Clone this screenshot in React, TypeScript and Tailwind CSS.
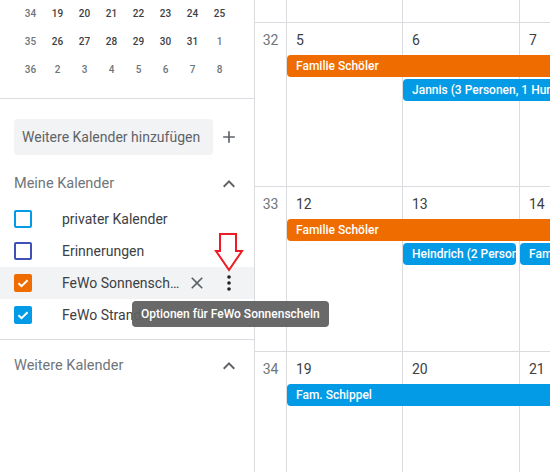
import React from "react";

const ChevronUp = () => (
  <svg width="24" height="24" viewBox="0 0 24 24" className="fill-[#5f6368]">
    <path d="M12 8l-6 6 1.41 1.41L12 10.83l4.59 4.58L18 14z" />
  </svg>
);

const Plus = () => (
  <svg width="20" height="20" viewBox="0 0 24 24" className="fill-[#5f6368]">
    <path d="M19 13h-6v6h-2v-6H5v-2h6V5h2v6h6v2z" />
  </svg>
);

const CloseIcon = () => (
  <svg width="20" height="20" viewBox="0 0 24 24" className="fill-[#5f6368]">
    <path d="M19 6.41L17.59 5 12 10.59 6.41 5 5 6.41 10.59 12 5 17.59 6.41 19 12 13.41 17.59 19 19 17.59 13.41 12z" />
  </svg>
);

const MoreVert = () => (
  <svg width="24" height="24" viewBox="0 0 24 24" className="fill-[#202124]">
    <circle cx="12" cy="6" r="1.8" />
    <circle cx="12" cy="12" r="1.8" />
    <circle cx="12" cy="18" r="1.8" />
  </svg>
);

function Checkbox({ checked, color }: { checked: boolean; color: string }) {
  if (checked) {
    return (
      <div className={`flex h-[18px] w-[18px] shrink-0 items-center justify-center rounded-[2px] ${color}`}>
        <svg width="18" height="18" viewBox="0 0 18 18">
          <path d="M4.5 9.2l3 3L13.6 6.2" fill="none" stroke="white" strokeWidth="2" />
        </svg>
      </div>
    );
  }
  return <div className={`h-[18px] w-[18px] shrink-0 rounded-[2px] border-2 ${color}`} />;
}

const miniRows: { wk: number; days: { d: number; cur: boolean }[] }[] = [
  { wk: 34, days: [19, 20, 21, 22, 23, 24, 25].map((d) => ({ d, cur: true })) },
  {
    wk: 35,
    days: [26, 27, 28, 29, 30, 31, 1].map((d, i) => ({ d, cur: i < 6 })),
  },
  { wk: 36, days: [2, 3, 4, 5, 6, 7, 8].map((d) => ({ d, cur: false })) },
];

function DayCells({ nums }: { nums: (number | null)[] }) {
  return (
    <>
      {nums.map((n, i) => (
        <div
          key={i}
          className={`row-[1/-1] border-l border-[#dadce0] pl-[9px] pt-[7px] text-[14px] leading-[20px] text-[#3c4043] ${
            i === 0 ? "col-start-2" : i === 1 ? "col-start-3" : i === 2 ? "col-start-4" : "col-start-5"
          }`}
        >
          {n}
        </div>
      ))}
    </>
  );
}

const grid = "grid grid-cols-[31px_116px_117px_116px_116px]";

export default function App() {
  return (
    <div className="relative flex h-[472px] w-[550px] overflow-hidden bg-white font-['Roboto',sans-serif]">
      {/* Sidebar */}
      <aside className="flex w-[255px] shrink-0 flex-col border-r border-[#dadce0]">
        <div className="border-b border-[#dadce0] pb-[15px]">
          <div className="-mt-px grid grid-cols-[repeat(8,27px)] pl-[17px]">
            {miniRows.map((r) => (
              <React.Fragment key={r.wk}>
                <div className="flex h-[28px] items-center justify-center text-[10px] font-medium text-[#70757a]">
                  {r.wk}
                </div>
                {r.days.map((d, i) => (
                  <div
                    key={i}
                    className={`flex h-[28px] items-center justify-center text-[10px] font-medium ${
                      d.cur ? "text-[#3c4043]" : "text-[#70757a]"
                    }`}
                  >
                    {d.d}
                  </div>
                ))}
              </React.Fragment>
            ))}
          </div>
        </div>

        <div className="mt-[20px] flex items-center pl-[14px]">
          <div className="flex h-[36px] w-[199px] items-center whitespace-nowrap rounded-[4px] bg-[#f1f3f4] pl-[8px] text-[14px] text-[#5f6368]">
            Weitere Kalender hinzufügen
          </div>
          <div className="ml-[6px] flex h-[20px] w-[20px] items-center justify-center">
            <Plus />
          </div>
        </div>

        <div className="mt-[8px] flex h-[40px] items-center justify-between pl-[14px] pr-[13px] pt-[2px]">
          <span className="text-[14.5px] text-[#70757a]">Meine Kalender</span>
          <ChevronUp />
        </div>

        <div className="flex h-[32px] items-center pl-[14px]">
          <Checkbox checked={false} color="border-[#039be5]" />
          <span className="ml-[30px] text-[14px] text-[#3c4043]">privater Kalender</span>
        </div>
        <div className="flex h-[32px] items-center pl-[14px]">
          <Checkbox checked={false} color="border-[#3f51b5]" />
          <span className="ml-[30px] text-[14px] text-[#3c4043]">Erinnerungen</span>
        </div>
        <div className="flex h-[32px] items-center bg-[#f1f3f4] pl-[14px]">
          <Checkbox checked={true} color="bg-[#ef6c00]" />
          <span className="ml-[30px] w-[118px] truncate text-[14px] text-[#3c4043]">FeWo Sonnenschein</span>
          <div className="ml-[7px] flex h-[20px] w-[20px] items-center justify-center">
            <CloseIcon />
          </div>
          <div className="ml-[10px] flex h-[24px] w-[24px] items-center justify-center">
            <MoreVert />
          </div>
        </div>
        <div className="flex h-[32px] items-center pl-[14px]">
          <Checkbox checked={true} color="bg-[#039be5]" />
          <span className="ml-[30px] text-[14px] text-[#3c4043]">FeWo Strandkorb</span>
        </div>

        <div className="mt-[8px] flex h-[49px] items-center justify-between border-t border-[#dadce0] pl-[14px] pr-[13px] pt-[3px]">
          <span className="text-[14.5px] text-[#70757a]">Weitere Kalender</span>
          <ChevronUp />
        </div>
      </aside>

      {/* Calendar */}
      <main className="flex min-w-0 flex-1 flex-col overflow-hidden">
        <div className={`${grid} h-[22px] grid-rows-[1fr]`}>
          <DayCells nums={[null, null, null, null]} />
        </div>

        <div className={`${grid} h-[164px] shrink-0 grid-rows-[32px_24px_24px_1fr] border-t border-[#dadce0]`}>
          <div className="col-start-1 row-start-1 pt-[7px] text-center text-[14px] leading-[20px] text-[#70757a]">32</div>
          <DayCells nums={[5, 6, 7, 8]} />
          <div className="col-[2/-1] row-start-2 ml-px h-[22px] overflow-hidden whitespace-nowrap rounded-[4px] bg-[#ef6c00] pl-[9px] text-[12px] font-medium leading-[22px] text-white">
            Familie Schöler
          </div>
          <div className="col-[3/-1] row-start-3 ml-px h-[22px] overflow-hidden whitespace-nowrap rounded-[4px] bg-[#039be5] pl-[9px] text-[12px] font-medium leading-[22px] text-white">
            Jannis (3 Personen, 1 Hund)
          </div>
        </div>

        <div className={`${grid} h-[165px] shrink-0 grid-rows-[32px_24px_24px_1fr] border-t border-[#dadce0]`}>
          <div className="col-start-1 row-start-1 pt-[7px] text-center text-[14px] leading-[20px] text-[#70757a]">33</div>
          <DayCells nums={[12, 13, 14, 15]} />
          <div className="col-[2/-1] row-start-2 ml-px h-[22px] overflow-hidden whitespace-nowrap rounded-[4px] bg-[#ef6c00] pl-[9px] text-[12px] font-medium leading-[22px] text-white">
            Familie Schöler
          </div>
          <div className="col-start-3 row-start-3 ml-px mr-[3px] h-[22px] overflow-hidden whitespace-nowrap rounded-[4px] bg-[#039be5] pl-[9px] text-[12px] font-medium leading-[22px] text-white">
            Heindrich (2 Personen)
          </div>
          <div className="col-[4/-1] row-start-3 ml-px h-[22px] overflow-hidden whitespace-nowrap rounded-[4px] bg-[#039be5] pl-[9px] text-[12px] font-medium leading-[22px] text-white">
            Familie Berger
          </div>
        </div>

        <div className={`${grid} min-h-0 flex-1 grid-rows-[32px_24px_24px_1fr] border-t border-[#dadce0]`}>
          <div className="col-start-1 row-start-1 pt-[7px] text-center text-[14px] leading-[20px] text-[#70757a]">34</div>
          <DayCells nums={[19, 20, 21, 22]} />
          <div className="col-[2/-1] row-start-2 ml-px h-[22px] overflow-hidden whitespace-nowrap rounded-[4px] bg-[#039be5] pl-[9px] text-[12px] font-medium leading-[22px] text-white">
            Fam. Schippel
          </div>
        </div>
      </main>

      {/* Red arrow annotation */}
      <svg className="absolute left-[214px] top-[232px]" width="30" height="40" viewBox="0 0 30 40">
        <polygon
          points="6,2 22,2 22,19 28,19 15,38 2,19 6,19"
          fill="none"
          stroke="#ed1c24"
          strokeWidth="2"
          strokeLinejoin="miter"
        />
      </svg>

      {/* Tooltip */}
      <div className="absolute left-[132px] top-[301px] flex h-[26px] items-center whitespace-nowrap rounded-[4px] bg-[#616161]/95 px-[9px] text-[12px] font-medium text-white">
        Optionen für FeWo Sonnenschein
      </div>
    </div>
  );
}
